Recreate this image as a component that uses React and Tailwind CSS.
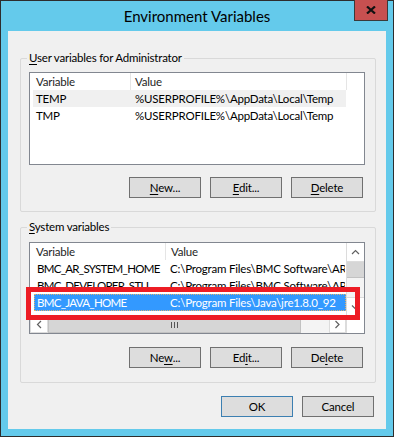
import React from 'react'

const font = "font-['Lato',sans-serif]"
const txt = 'text-[11.5px] tracking-[-0.2px]'

function Btn({ children, primary }) {
  return (
    <button
      className={
        'w-[72px] h-[21px] leading-[19px] text-black ' +
        txt +
        (primary ? ' border border-[#3c7fb1] bg-[#dddddd]' : ' border border-[#707070] bg-[#dddddd]')
      }
    >
      {children}
    </button>
  )
}

function U({ children }) {
  return <span className="underline underline-offset-2">{children}</span>
}

function Group({ label, children, className }) {
  return (
    <div className={'relative ml-[12px] w-[356px] border border-[#d9d9d9] rounded-[2px] ' + className}>
      <span className={'absolute left-[6px] -top-[9px] px-[2px] bg-[#f0f0f0] leading-[16px] text-black ' + txt}>
        {label}
      </span>
      {children}
    </div>
  )
}

function Chevron({ dir }) {
  const pts = {
    up: '1,5 4.5,1.5 8,5',
    down: '1,1.5 4.5,5 8,1.5',
    left: '5,1 1.5,4.5 5,8',
    right: '1.5,1 5,4.5 1.5,8',
  }[dir]
  const vertical = dir === 'up' || dir === 'down'
  return (
    <svg width={vertical ? 9 : 7} height={vertical ? 7 : 9} className="block">
      <polyline points={pts} fill="none" stroke="#606060" strokeWidth="1.2" />
    </svg>
  )
}

function UserList() {
  const rows = [
    ['TEMP', '%USERPROFILE%\\AppData\\Local\\Temp'],
    ['TMP', '%USERPROFILE%\\AppData\\Local\\Temp'],
  ]
  return (
    <div className={'w-[336px] h-[93px] border border-[#828790] bg-white ' + txt}>
      <div className="flex h-[17px] leading-[17px] text-[#1e1e1e]">
        <div className="w-[101px] pl-[6px] border-r border-[#e5e5e5]">Variable</div>
        <div className="w-[216px] pl-[4px] border-r border-[#e5e5e5]">Value</div>
      </div>
      {rows.map(([k, v], i) => (
        <div
          key={k}
          className={'ml-[3px] w-[313px] flex h-[17px] leading-[17px] ' + (i === 0 ? 'bg-[#f0f0f0]' : '')}
        >
          <div className="w-[98px] pl-[3px] whitespace-nowrap">{k}</div>
          <div className="pl-[4px] whitespace-nowrap">{v}</div>
        </div>
      ))}
    </div>
  )
}

function SystemList() {
  const rows = [
    ['BMC_AR_SYSTEM_HOME', 'C:\\Program Files\\BMC Software\\ARS'],
    ['BMC_DEVELOPER_STU', 'C:\\Program Files\\BMC Software\\ARS'],
    ['BMC_JAVA_HOME', 'C:\\Program Files\\Java\\jre1.8.0_92'],
  ]
  return (
    <div className={'relative w-[336px] h-[92px] border border-[#828790] bg-white flex ' + txt}>
      <div className="w-[316px] flex flex-col">
        <div className="flex h-[17px] leading-[17px] text-[#1e1e1e]">
          <div className="w-[136px] pl-[6px] border-r border-[#e5e5e5]">Variable</div>
          <div className="w-[180px] pl-[5px]">Value</div>
        </div>
        <div className="h-[56px] overflow-hidden">
          {rows.map(([k, v], i) => (
            <div
              key={k}
              className={
                'ml-[4px] w-[312px] flex h-[17px] leading-[15px] overflow-hidden border ' +
                (i === 2
                  ? 'bg-[#3399ff] text-white border-dotted border-[#e3b36b]'
                  : 'border-transparent')
              }
            >
              <div className="w-[131px] shrink-0 pl-[2px] whitespace-nowrap overflow-hidden tracking-[-0.7px]">{k}</div>
              <div className="pl-[4px] whitespace-nowrap">{v}</div>
            </div>
          ))}
        </div>
        <div className="h-[17px] flex bg-[#f0f0f0]">
          <div className="w-[18px] flex items-center justify-center bg-white border border-[#dcdcdc]">
            <Chevron dir="left" />
          </div>
          <div className="w-[253px] flex items-center justify-center bg-[#d6d6d6] border border-[#c2c2c2]">
            <div className="flex gap-[2px]">
              <div className="w-px h-[6px] bg-[#555]" />
              <div className="w-px h-[6px] bg-[#555]" />
              <div className="w-px h-[6px] bg-[#555]" />
            </div>
          </div>
          <div className="w-[28px] bg-[#f4f4f4]" />
          <div className="w-[17px] flex items-center justify-center bg-white border border-[#dcdcdc]">
            <Chevron dir="right" />
          </div>
        </div>
      </div>
      <div className="w-[18px] flex flex-col bg-[#f4f4f4] border-l border-[#dcdcdc]">
        <div className="h-[19px] flex items-center justify-center bg-white border-b border-[#dcdcdc]">
          <Chevron dir="up" />
        </div>
        <div className="h-[16px] bg-[#d6d6d6] border-b border-[#c2c2c2]" />
        <div className="h-[19px]" />
        <div className="h-[19px] flex items-center justify-center bg-white border-t border-[#dcdcdc]">
          <Chevron dir="down" />
        </div>
        <div className="flex-1 bg-white" />
      </div>
      <div className="absolute -left-[4px] top-[44px] w-[334px] h-[33px] border-[5px] border-[#ed1c24]" />
    </div>
  )
}

export default function App() {
  return (
    <div className={'w-[394px] h-[437px] bg-[#64caeb] border border-[#2d2d2d] flex flex-col ' + font}>
      <div className="relative h-[30px] shrink-0 flex items-center justify-center">
        <span className="text-[15px] text-black pt-[1px]">Environment Variables</span>
        <div className="absolute right-[5px] -top-px w-[34px] h-[21px] bg-[#c75050] border border-t-0 border-[#3a3a3a] flex items-center justify-center">
          <svg width="10" height="8" viewBox="0 0 10 8">
            <path d="M1 0.5 L9 7.5 M9 0.5 L1 7.5" stroke="#111" strokeWidth="2.2" />
          </svg>
        </div>
      </div>
      <div className="mx-[7px] h-[398px] shrink-0 bg-[#f0f0f0] text-black">
        <Group label={<><U>U</U>ser variables for Administrator</>} className="mt-[27px] h-[154px]">
          <div className="pt-[13px] pl-[8px]">
            <UserList />
          </div>
          <div className="mt-[12px] pl-[108px] flex gap-[9px]">
            <Btn><U>N</U>ew...</Btn>
            <Btn><U>E</U>dit...</Btn>
            <Btn><U>D</U>elete</Btn>
          </div>
        </Group>
        <Group label={<><U>S</U>ystem variables</>} className="mt-[15px] h-[156px]">
          <div className="pt-[14px] pl-[8px]">
            <SystemList />
          </div>
          <div className="mt-[13px] pl-[108px] flex gap-[9px]">
            <Btn>Ne<U>w</U>...</Btn>
            <Btn>Ed<U>i</U>t...</Btn>
            <Btn>De<U>l</U>ete</Btn>
          </div>
        </Group>
        <div className="mt-[13px] pl-[213px] flex gap-[9px]">
          <Btn primary>OK</Btn>
          <Btn>Cancel</Btn>
        </div>
      </div>
    </div>
  )
}
